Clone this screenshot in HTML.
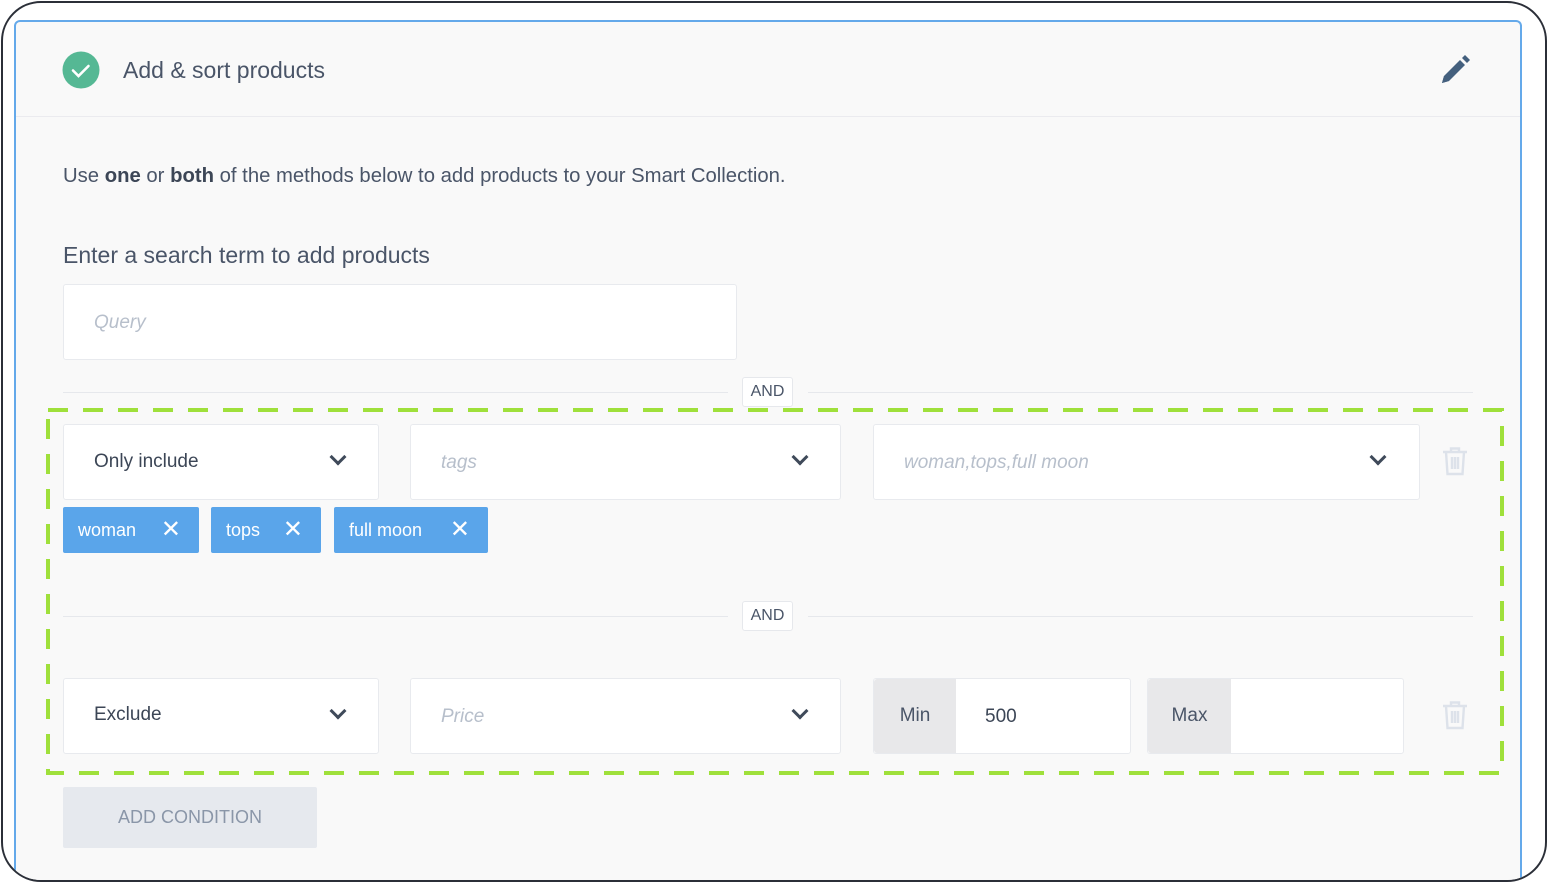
<!DOCTYPE html>
<html><head><meta charset="utf-8"><style>
*{box-sizing:border-box;margin:0;padding:0}
html,body{width:1548px;height:883px;overflow:hidden}
body{background:#fff;position:relative;font-family:"Liberation Sans",sans-serif;color:#4a5568}
.abs{position:absolute}
.frame{left:1px;top:1px;width:1546px;height:881px;border:2px solid #2b2f38;border-radius:40px;overflow:hidden}
.card{left:11px;top:17px;width:1508px;height:880px;border:2px solid #64a9ea;border-bottom:none;border-radius:6px 6px 0 0;background:#f9f9f9}
.hdrline{left:16px;top:116px;width:1504px;height:1px;background:#ebebef}
.box{background:#fff;border:1px solid #e8eaee;border-radius:3px}
.ph{color:#b7bfcb;font-style:italic;font-size:19px}
.txt{font-size:19px;color:#3c4656}
.chev{position:absolute;width:12px;height:12px;border-right:3px solid #3f4a5a;border-bottom:3px solid #3f4a5a;transform:rotate(45deg)}
.line{height:1px;background:#e6e8ec}
.and{background:#fff;border:1px solid #e6e8ec;border-radius:3px;font-size:16px;color:#4a5568;text-align:center;line-height:28px}
.tag{background:#5aa5ea;color:#fff;font-size:18px;line-height:46px;border-radius:2px;padding-left:15px}
.tag span{position:absolute;right:18px;top:0;font-size:24px}
.addon{background:#e8e8ea;font-size:19px;color:#4a5568;text-align:center;line-height:74px;border-radius:3px 0 0 3px}
</style></head><body>
<div class="abs frame"><div class="abs card"></div></div>
<div class="abs hdrline"></div>
<svg class="abs" style="left:62px;top:51px" width="38" height="38"><circle cx="19" cy="19" r="18.5" fill="#55b894"/><path d="M11 19.5l5.5 5.5 10-10" stroke="#fff" stroke-width="2.6" fill="none" stroke-linecap="round"/></svg>
<div class="abs" style="left:123px;top:57px;font-size:23px;color:#4a5568">Add &amp; sort products</div>
<svg class="abs" style="left:1438px;top:53px" width="34" height="34" viewBox="0 0 34 34"><path d="M4 30l2-7L22 7l5 5L11 28z" fill="#44607e"/><path d="M24 5l3-3 5 5-3 3z" fill="#44607e"/><path d="M4 30l2-7 5 5z" fill="#44607e"/></svg>
<div class="abs" style="left:63px;top:165px;font-size:20.3px;color:#4a5568;white-space:nowrap">Use <b style="color:#3c4656">one</b> or <b style="color:#3c4656">both</b> of the methods below to add products to your Smart Collection.</div>
<div class="abs" style="left:63px;top:242px;font-size:23px;color:#4a5568">Enter a search term to add products</div>
<div class="abs box" style="left:63px;top:284px;width:674px;height:76px"><div class="abs ph" style="left:30px;top:27px">Query</div></div>
<div class="abs line" style="left:63px;top:392px;width:665px"></div>
<div class="abs line" style="left:808px;top:392px;width:665px"></div>
<div class="abs and" style="left:742px;top:377px;width:51px;height:30px">AND</div>
<svg class="abs" style="left:46px;top:408px" width="1458" height="367"><rect x="2" y="2" width="1454" height="363" fill="none" stroke="#9fe03b" stroke-width="4" stroke-dasharray="20 15"/></svg>
<div class="abs box" style="left:63px;top:424px;width:316px;height:76px"><div class="abs txt" style="left:30px;top:26px">Only include</div><div class="chev" style="left:268px;top:26px"></div></div>
<div class="abs box" style="left:410px;top:424px;width:431px;height:76px"><div class="abs ph" style="left:30px;top:27px">tags</div><div class="chev" style="left:383px;top:26px"></div></div>
<div class="abs box" style="left:873px;top:424px;width:547px;height:76px"><div class="abs ph" style="left:30px;top:27px">woman,tops,full moon</div><div class="chev" style="left:498px;top:26px"></div></div>
<svg class="abs" style="left:1441px;top:446px" width="28" height="30" viewBox="0 0 28 30"><g fill="none" stroke="#dde2ea" stroke-width="2.4"><path d="M2 6h24M10 6V2.5h8V6M5 6l1.5 22h15L23 6M11 11v12M14 11v12M17 11v12"/></g></svg>
<div class="abs tag" style="left:63px;top:507px;width:136px;height:46px">woman<span>✕</span></div>
<div class="abs tag" style="left:211px;top:507px;width:110px;height:46px">tops<span>✕</span></div>
<div class="abs tag" style="left:334px;top:507px;width:154px;height:46px">full moon<span>✕</span></div>
<div class="abs line" style="left:63px;top:616px;width:665px"></div>
<div class="abs line" style="left:808px;top:616px;width:665px"></div>
<div class="abs and" style="left:742px;top:601px;width:51px;height:30px">AND</div>
<div class="abs box" style="left:63px;top:678px;width:316px;height:76px"><div class="abs txt" style="left:30px;top:25px">Exclude</div><div class="chev" style="left:268px;top:26px"></div></div>
<div class="abs box" style="left:410px;top:678px;width:431px;height:76px"><div class="abs ph" style="left:30px;top:27px">Price</div><div class="chev" style="left:383px;top:26px"></div></div>
<div class="abs box" style="left:873px;top:678px;width:258px;height:76px"><div class="abs addon" style="left:0;top:0;width:82px;height:74px">Min</div><div class="abs txt" style="left:111px;top:27px">500</div></div>
<div class="abs box" style="left:1147px;top:678px;width:257px;height:76px"><div class="abs addon" style="left:0;top:0;width:83px;height:74px">Max</div></div>
<svg class="abs" style="left:1441px;top:700px" width="28" height="30" viewBox="0 0 28 30"><g fill="none" stroke="#dde2ea" stroke-width="2.4"><path d="M2 6h24M10 6V2.5h8V6M5 6l1.5 22h15L23 6M11 11v12M14 11v12M17 11v12"/></g></svg>
<div class="abs" style="left:63px;top:787px;width:254px;height:61px;background:#e6e9ee;border-radius:2px;color:#8a96a8;font-size:18px;line-height:61px;text-align:center">ADD CONDITION</div>
</body></html>
